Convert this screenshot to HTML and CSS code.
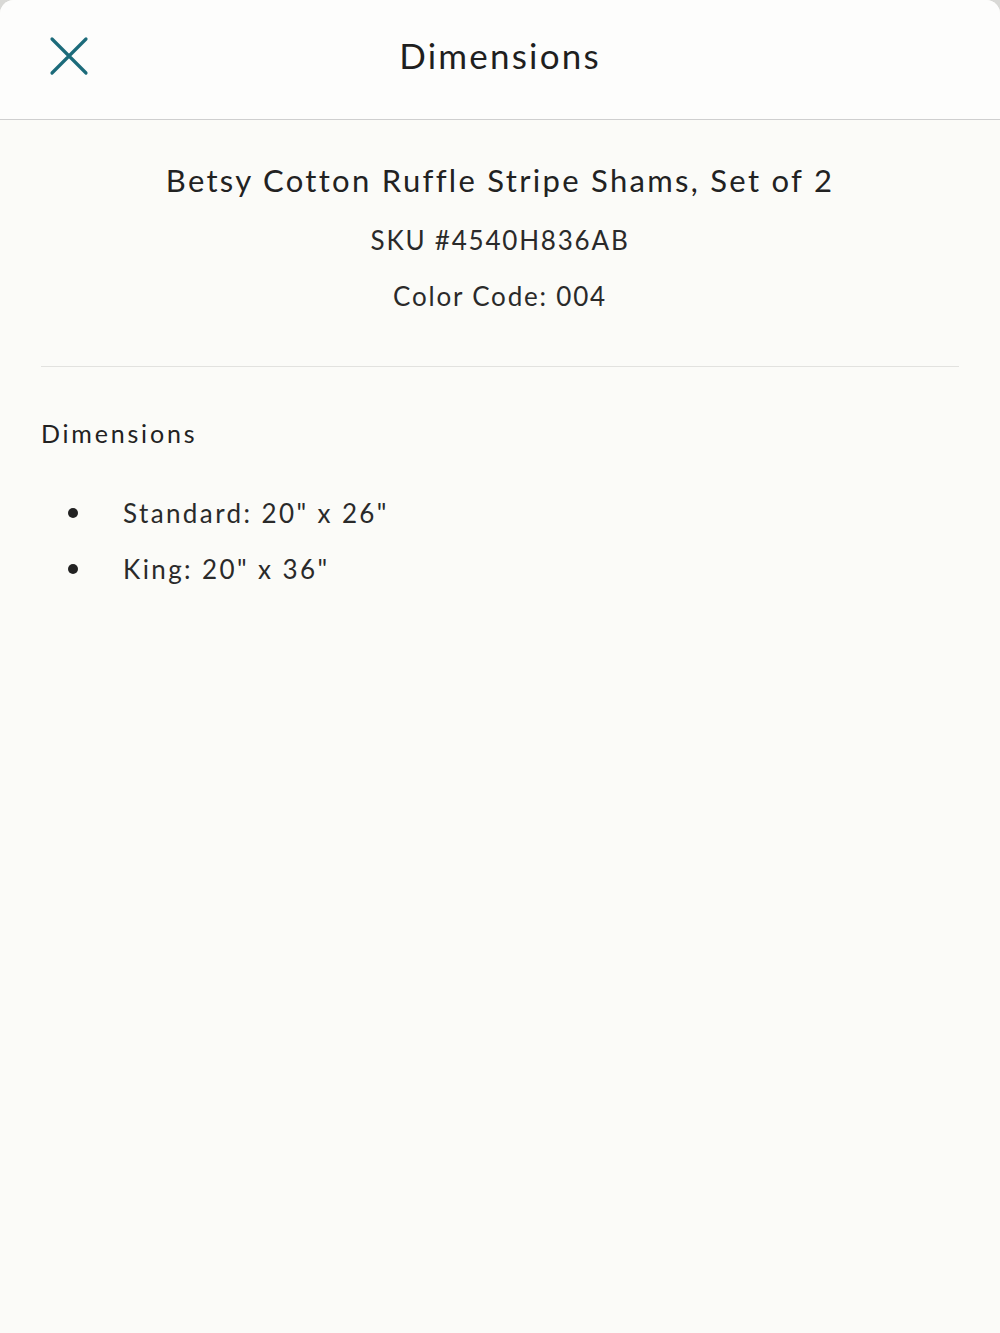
FILE: index.html
```html
<!DOCTYPE html>
<html lang="en">
<head>
<meta charset="utf-8">
<title>Dimensions</title>
<link rel="stylesheet" href="styles.css">
</head>
<body>
<div class="sheet">
  <header class="sheet-header">
    <button class="close-btn" aria-label="Close">
      <svg width="40" height="40" viewBox="0 0 40 40">
        <path d="M3 3 L37 37 M37 3 L3 37" stroke="#1c6b7a" stroke-width="3.2" stroke-linecap="round" fill="none"/>
      </svg>
    </button>
    <h1 class="sheet-title">Dimensions</h1>
  </header>
  <main class="sheet-body">
    <section class="product-info">
      <h2 class="product-name">Betsy Cotton Ruffle Stripe Shams, Set of 2</h2>
      <p class="product-meta">SKU #4540H836AB</p>
      <p class="product-meta">Color Code: 004</p>
    </section>
    <section class="dims">
      <h3 class="dims-heading">Dimensions</h3>
      <ul class="dims-list">
        <li>Standard: 20" x 26"</li>
        <li>King: 20" x 36"</li>
      </ul>
    </section>
  </main>
</div>
</body>
</html>
```

FILE: styles.css
```css
html, body {
  margin: 0;
  padding: 0;
  background: #d9d9d6;
}

body {
  font-family: "Lato", "Open Sans", sans-serif;
  color: #222;
}

.sheet {
  min-height: 1333px;
  background: #fbfbf8;
  border-radius: 14px 14px 0 0;
  overflow: hidden;
}

.sheet-header {
  position: relative;
  height: 119px;
  background: #fdfdfc;
  border-bottom: 1px solid #cfcfcf;
  display: flex;
  align-items: center;
  justify-content: center;
}

.close-btn {
  position: absolute;
  left: 49px;
  top: 36px;
  width: 40px;
  height: 40px;
  padding: 0;
  border: 0;
  background: none;
}

.close-btn svg {
  display: block;
}

.sheet-title {
  margin: 0 0 10px;
  font-size: 35px;
  font-weight: 400;
  letter-spacing: 2.2px;
  color: #1f1f1f;
}

.sheet-body {
  padding: 0 41px;
}

.product-info {
  text-align: center;
  padding-top: 41px;
  padding-bottom: 42px;
  border-bottom: 1px solid #e2e2df;
}

.product-name {
  margin: 0 0 13px;
  font-size: 31px;
  font-weight: 400;
  letter-spacing: 2.3px;
  color: #222;
}

.product-meta {
  margin: 0;
  font-size: 26px;
  line-height: 56px;
  letter-spacing: 1.8px;
  color: #2a2a2a;
}

.dims-heading {
  margin: 51px 0 37px;
  font-size: 25px;
  font-weight: 400;
  letter-spacing: 2.8px;
  color: #222;
}

.dims-list {
  margin: 0;
  padding: 0;
  list-style: none;
}

.dims-list li {
  position: relative;
  padding-left: 82px;
  font-size: 26px;
  line-height: 56px;
  letter-spacing: 2.4px;
  color: #2a2a2a;
}

.dims-list li::before {
  content: "";
  position: absolute;
  left: 27px;
  top: 23px;
  width: 10px;
  height: 10px;
  border-radius: 50%;
  background: #222;
}
```
